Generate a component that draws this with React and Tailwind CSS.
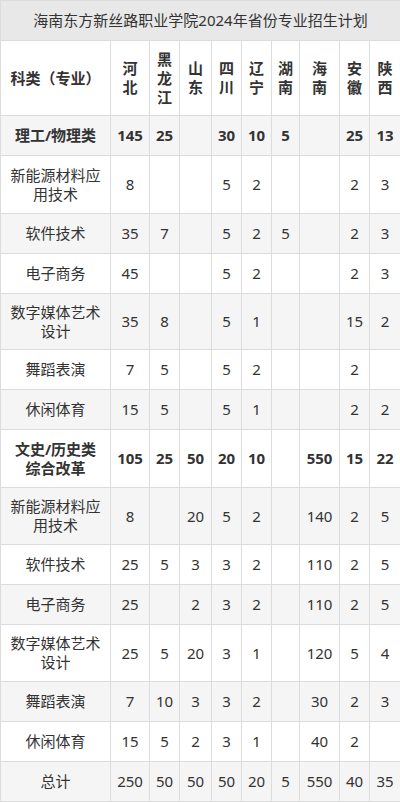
import React from "react";

const cols = [110, 39, 30, 32, 30, 30, 28, 40, 30, 31];
const provinces = [["河", "北"], ["黑", "龙", "江"], ["山", "东"], ["四", "川"], ["辽", "宁"], ["湖", "南"], ["海", "南"], ["安", "徽"], ["陕", "西"]];

const rows = [
  { name: ["理工/物理类"], bold: true, h: 40, v: ["145", "25", "", "30", "10", "5", "", "25", "13"] },
  { name: ["新能源材料应", "用技术"], h: 58, v: ["8", "", "", "5", "2", "", "", "2", "3"] },
  { name: ["软件技术"], h: 40, v: ["35", "7", "", "5", "2", "5", "", "2", "3"] },
  { name: ["电子商务"], h: 40, v: ["45", "", "", "5", "2", "", "", "2", "3"] },
  { name: ["数字媒体艺术", "设计"], h: 56, v: ["35", "8", "", "5", "1", "", "", "15", "2"] },
  { name: ["舞蹈表演"], h: 40, v: ["7", "5", "", "5", "2", "", "", "2", ""] },
  { name: ["休闲体育"], h: 40, v: ["15", "5", "", "5", "1", "", "", "2", "2"] },
  { name: ["文史/历史类", "综合改革"], bold: true, h: 58, v: ["105", "25", "50", "20", "10", "", "550", "15", "22"] },
  { name: ["新能源材料应", "用技术"], h: 57, v: ["8", "", "20", "5", "2", "", "140", "2", "5"] },
  { name: ["软件技术"], h: 40, v: ["25", "5", "3", "3", "2", "", "110", "2", "5"] },
  { name: ["电子商务"], h: 40, v: ["25", "", "2", "3", "2", "", "110", "2", "5"] },
  { name: ["数字媒体艺术", "设计"], h: 57, v: ["25", "5", "20", "3", "1", "", "120", "5", "4"] },
  { name: ["舞蹈表演"], h: 40, v: ["7", "10", "3", "3", "2", "", "30", "2", "3"] },
  { name: ["休闲体育"], h: 40, v: ["15", "5", "2", "3", "1", "", "40", "2", ""] },
  { name: ["总计"], h: 40, v: ["250", "50", "50", "50", "20", "5", "550", "40", "35"] },
];

function Lines({ parts }) {
  return parts.map((p, i) => (
    <React.Fragment key={i}>
      {i > 0 && <br />}
      {p}
    </React.Fragment>
  ));
}

export default function App() {
  return (
    <div
      className="w-[400px] bg-white text-[#333]"
      style={{ fontFamily: '"Noto Sans", "Noto Sans CJK SC", sans-serif' }}
    >
      <table className="w-[400px] table-fixed border-collapse text-[15px] leading-[19px]">
        <colgroup>
          {cols.map((w, i) => (
            <col key={i} style={{ width: w }} />
          ))}
        </colgroup>
        <tbody>
          <tr className="h-[40px] bg-[#e8e8e8]">
            <td colSpan={10} className="border border-[#dcdcdc] p-0 text-center text-[15px]">
              海南东方新丝路职业学院2024年省份专业招生计划
            </td>
          </tr>
          <tr className="h-[75px] bg-white font-bold">
            <td className="border border-[#dcdcdc] p-0 text-center">科类（专业）</td>
            {provinces.map((p, i) => (
              <td key={i} className="border border-[#dcdcdc] p-0 text-center text-[15px] leading-[19px]">
                <Lines parts={p} />
              </td>
            ))}
          </tr>
          {rows.map((r, ri) => (
            <tr
              key={ri}
              style={{ height: r.h }}
              className={`${ri % 2 === 0 ? "bg-[#f5f5f5]" : "bg-white"} ${r.bold ? "font-bold" : ""}`}
            >
              <td className="border border-[#dcdcdc] p-0 text-center">
                <Lines parts={r.name} />
              </td>
              {r.v.map((v, vi) => (
                <td key={vi} className="border border-[#dcdcdc] p-0 text-center">
                  {v}
                </td>
              ))}
            </tr>
          ))}
        </tbody>
      </table>
    </div>
  );
}
